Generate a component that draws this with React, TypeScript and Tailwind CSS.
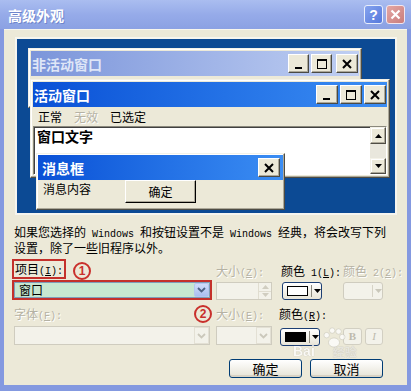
import React from 'react';

type Kind = 'min' | 'max' | 'close';

function Mono({ children }: { children: React.ReactNode }) {
  return <span className="font-['Liberation_Mono',monospace] text-[10px] leading-none">{children}</span>;
}

function Label({ text, pre = '', acc, disabled }: { text: string; pre?: string; acc: string; disabled?: boolean }) {
  return (
    <span className={disabled ? 'text-[#b5b2a4] [text-shadow:1px_1px_0_#fff]' : 'text-black'}>
      {text}
      <Mono>
        {pre}(<span className="underline">{acc}</span>):
      </Mono>
    </span>
  );
}

function Num({ n }: { n: string }) {
  return (
    <span className="w-[18px] h-[18px] rounded-full border-2 border-[#c9302c] text-[#c9302c] font-bold text-[12px] leading-none flex items-center justify-center font-['Liberation_Sans',sans-serif]">
      {n}
    </span>
  );
}

function TitleBtn({ kind, w = 'w-[21px]' }: { kind: Kind; w?: string }) {
  return (
    <div className={`${w} h-[19px] bg-[#ece9d8] border border-t-white border-l-white border-r-[#4a4a44] border-b-[#4a4a44] shadow-[inset_-1px_-1px_0_#aca899] flex items-center justify-center`}>
      <svg width="14" height="12" viewBox="0 0 14 12">
        {kind === 'min' && <rect x="3" y="9" width="7" height="2" fill="#000" />}
        {kind === 'max' && (
          <>
            <rect x="2.5" y="1.5" width="9" height="9" fill="none" stroke="#000" />
            <rect x="2" y="1" width="10" height="2" fill="#000" />
          </>
        )}
        {kind === 'close' && <path d="M3 2 L11 10 M11 2 L3 10" stroke="#000" strokeWidth="2" />}
      </svg>
    </div>
  );
}

function Chevron({ color }: { color: string }) {
  return (
    <svg width="9" height="6" viewBox="0 0 9 6">
      <path d="M1 1 L4.5 4.5 L8 1" fill="none" stroke={color} strokeWidth="1.8" />
    </svg>
  );
}

function Tri({ color = '#000', up }: { color?: string; up?: boolean }) {
  return (
    <svg width="7" height="4" viewBox="0 0 7 4">
      <path d={up ? 'M0 4 L3.5 0 L7 4 Z' : 'M0 0 L7 0 L3.5 4 Z'} fill={color} />
    </svg>
  );
}

function ColorBtn({ swatch, disabled }: { swatch?: string; disabled?: boolean }) {
  return (
    <div
      className={`w-[40px] h-[18px] rounded-[3px] border flex items-center pl-[4px] ${
        disabled ? 'border-[#cfccbf] bg-[#f3f2ea]' : 'border-[#1c3e73] bg-gradient-to-b from-white to-[#e8e5d8]'
      }`}
    >
      <div className="w-[22px] h-[10px] border border-black" style={swatch ? { background: swatch } : { borderColor: 'transparent' }} />
      <div className={`ml-[3px] h-[12px] border-l ${disabled ? 'border-[#d6d3c6]' : 'border-[#8c8a80]'}`} />
      <div className="ml-[2px]">
        <Tri color={disabled ? '#c9c7ba' : '#000'} />
      </div>
    </div>
  );
}

function XpButton({ label }: { label: string }) {
  return (
    <div className="w-[73px] h-[19px] rounded-[3px] border border-[#003c74] bg-gradient-to-b from-white to-[#e6e3d6] shadow-[inset_0_-2px_0_#d8d2c4] flex items-center justify-center text-[13px] leading-none">
      {label}
    </div>
  );
}

const frame =
  'bg-[#ece9d8] border border-t-[#f4f2e8] border-l-[#f4f2e8] border-r-[#4e4c44] border-b-[#4e4c44] shadow-[inset_-1px_-1px_0_#aca899,inset_1px_1px_0_#fff]';

export default function App() {
  return (
    <div className="w-[411px] h-[391px] bg-[#8499e0] flex flex-col font-['Noto_Sans_CJK_SC',sans-serif] text-[12px] text-black overflow-hidden relative">
      {/* title bar */}
      <div className="h-[29px] shrink-0 flex items-center justify-between pl-[8px] pr-[6px] bg-gradient-to-b from-[#aabdf0] via-[#96abe9] to-[#8ba1e3]">
        <span className="text-white text-[14px] font-bold leading-none [text-shadow:1px_1px_0_#6f86cc]">高级外观</span>
        <div className="flex gap-[3px]">
          <div className="w-[19px] h-[19px] rounded-[3px] border border-[#e8eefc] bg-gradient-to-br from-[#86a3ee] to-[#5678dc] flex items-center justify-center text-white font-bold text-[14px] leading-none font-['Liberation_Sans',sans-serif]">
            ?
          </div>
          <div className="w-[19px] h-[19px] rounded-[3px] border border-[#f2e6ee] bg-gradient-to-br from-[#e4a7a4] to-[#c97d7c] flex items-center justify-center">
            <svg width="11" height="11" viewBox="0 0 11 11">
              <path d="M1.5 1.5 L9.5 9.5 M9.5 1.5 L1.5 9.5" stroke="#fff" strokeWidth="2.2" />
            </svg>
          </div>
        </div>
      </div>

      {/* dialog body */}
      <div className="mx-[4px] h-[356px] shrink-0 bg-[#ece9d8] border-t border-[#f7f5ec] flex flex-col">
        {/* preview */}
        <div className="ml-[11px] mt-[7px] w-[382px] h-[178px] shrink-0 border-2 border-[#f6f5ef] bg-[#0c4a94] relative">
          {/* inactive window */}
          <div className={`absolute left-[11px] top-[9px] w-[334px] h-[60px] p-[2px] ${frame}`}>
            <div className="h-[25px] flex items-center justify-between pl-[1px] pr-[1px] bg-gradient-to-r from-[#7c95da] to-[#c0cff2]">
              <span className="text-[14px] font-bold text-[#dfe6f7] leading-none">非活动窗口</span>
              <div className="flex">
                <TitleBtn kind="min" />
                <div className="ml-[2px]">
                  <TitleBtn kind="max" />
                </div>
                <div className="ml-[4px]">
                  <TitleBtn kind="close" w="w-[22px]" />
                </div>
              </div>
            </div>
          </div>

          {/* active window */}
          <div className={`absolute left-[13px] top-[40px] w-[360px] h-[99px] p-[2px] flex flex-col ${frame}`}>
            <div className="h-[25px] shrink-0 flex items-center justify-between pl-[1px] pr-[1px] bg-gradient-to-r from-[#0a50d6] to-[#3b8df3]">
              <span className="text-[14px] font-bold text-white leading-none">活动窗口</span>
              <div className="flex gap-[2px]">
                <TitleBtn kind="min" w="w-[22px]" />
                <TitleBtn kind="max" w="w-[22px]" />
                <TitleBtn kind="close" w="w-[22px]" />
              </div>
            </div>
            <div className="h-[19px] shrink-0 flex items-center gap-[12px] pl-[5px] leading-none">
              <span>正常</span>
              <span className="text-[#b5b2a4] [text-shadow:1px_1px_0_#fff]">无效</span>
              <span>已选定</span>
            </div>
            <div className="flex-1 flex bg-white border border-t-[#8a887c] border-l-[#8a887c] border-r-white border-b-white shadow-[inset_1px_1px_0_#404040]">
              <div className="flex-1 pl-[3px] pt-[1px] text-[14px] font-bold leading-[16px]">窗口文字</div>
              <div className="w-[16px] flex flex-col bg-[#e9e7dd]">
                <div className={`h-[17px] flex items-center justify-center ${frame}`}>
                  <Tri up />
                </div>
                <div className="flex-1" />
                <div className={`h-[16px] flex items-center justify-center ${frame}`}>
                  <Tri />
                </div>
              </div>
            </div>
          </div>

          {/* message box */}
          <div className={`absolute left-[19px] top-[114px] w-[249px] h-[57px] p-[1px] flex flex-col ${frame}`}>
            <div className="h-[25px] shrink-0 flex items-center justify-between pl-[4px] pr-[3px] bg-gradient-to-r from-[#0a50d6] to-[#3b8df3]">
              <span className="text-[14px] font-bold text-white leading-none">消息框</span>
              <TitleBtn kind="close" w="w-[22px]" />
            </div>
            <div className="flex items-start">
              <span className="pl-[5px] pt-[2px] leading-[14px]">消息内容</span>
              <div className="ml-[34px] w-[71px] h-[23px] bg-[#ece9d8] border border-t-white border-l-white border-r-black border-b-black shadow-[inset_-1px_-1px_0_#aca899] flex items-center justify-center leading-none">
                确定
              </div>
            </div>
          </div>
        </div>

        {/* explanation */}
        <div className="ml-[10px] mt-[9px] h-[30px] shrink-0 leading-[15px] whitespace-nowrap">
          如果您选择的<Mono> Windows </Mono>和按钮设置不是<Mono> Windows </Mono>经典，将会改写下列
          <br />
          设置，除了一些旧程序以外。
        </div>

        {/* controls */}
        <div className="ml-[8px] mt-[5px] grid grid-cols-[204px_64px_63px_40px] grid-rows-[21px_20px_26px_20px] leading-[14px]">
          {/* row 1 labels */}
          <div className="flex items-start">
            <div className="h-[20px] border-2 border-[#c4302b] pl-[1px] pr-[1px] flex items-center">
              <Label text="项目" acc="I" />
            </div>
            <div className="ml-[7px] mt-[3px]">
              <Num n="1" />
            </div>
          </div>
          <div className="self-end pb-[1px]">
            <Label text="大小" acc="Z" disabled />
          </div>
          <div className="self-end pb-[1px] pl-[1px]">
            <Label text="颜色" pre=" 1" acc="L" />
          </div>
          <div className="self-end pb-[1px] whitespace-nowrap">
            <Label text="颜色" pre=" 2" acc="2" disabled />
          </div>

          {/* row 1 controls */}
          <div className="w-[200px] h-[20px] border-2 border-[#c4302b]">
            <div className="h-full border border-[#7f9db9] bg-[#c7e7d0] flex items-center">
              <span className="flex-1 pl-[4px] leading-none">窗口</span>
              <div className="w-[15px] h-full rounded-[2px] bg-gradient-to-b from-[#cfdcfa] to-[#aabff0] border border-[#b4c6ef] flex items-center justify-center">
                <Chevron color="#4d6185" />
              </div>
            </div>
          </div>
          <div className="mt-[2px] w-[56px] h-[18px] border border-[#cfccbf] bg-[#f3f2ea] flex justify-end">
            <div className="w-[13px] h-full flex flex-col border-l border-[#e0ddd0]">
              <div className="flex-1 flex items-center justify-center border-b border-[#e0ddd0]">
                <Tri up color="#d0cdc0" />
              </div>
              <div className="flex-1 flex items-center justify-center">
                <Tri color="#d0cdc0" />
              </div>
            </div>
          </div>
          <div className="mt-[2px] ml-[2px]">
            <ColorBtn swatch="#ffffff" />
          </div>
          <div className="mt-[2px]">
            <ColorBtn disabled />
          </div>

          {/* row 2 labels */}
          <div className="w-[200px] flex items-end justify-between pb-[3px]">
            <span className="ml-[2px] mb-[1px]">
              <Label text="字体" acc="F" disabled />
            </span>
            <Num n="2" />
          </div>
          <div className="self-end pb-[4px]">
            <Label text="大小" acc="E" disabled />
          </div>
          <div className="self-end pb-[4px] -ml-[1px]">
            <Label text="颜色" acc="R" />
          </div>
          <div />

          {/* row 2 controls */}
          <div className="ml-[2px] w-[196px] h-[19px] border border-[#cfccbf] bg-[#f3f2ea] flex justify-end">
            <div className="w-[15px] h-full border border-[#e3e0d4] flex items-center justify-center">
              <Chevron color="#cbc8bb" />
            </div>
          </div>
          <div className="w-[56px] h-[19px] border border-[#cfccbf] bg-[#f3f2ea] flex justify-end">
            <div className="w-[15px] h-full border border-[#e3e0d4] flex items-center justify-center">
              <Chevron color="#cbc8bb" />
            </div>
          </div>
          <div className="mt-[2px]">
            <ColorBtn swatch="#000000" />
          </div>
          <div className="mt-[2px] flex gap-[3px]">
            <div className="w-[19px] h-[17px] rounded-[3px] border border-[#d2cfc2] bg-[#f3f2ea] flex items-center justify-center font-['Liberation_Serif',serif] font-bold text-[11px] text-[#bdbaad] leading-none">
              B
            </div>
            <div className="w-[18px] h-[17px] rounded-[3px] border border-[#d2cfc2] bg-[#f3f2ea] flex items-center justify-center font-['Liberation_Serif',serif] italic text-[11px] text-[#bdbaad] leading-none">
              I
            </div>
          </div>
        </div>

        {/* buttons */}
        <div className="mt-[13px] flex justify-end gap-[8px] pr-[24px]">
          <XpButton label="确定" />
          <XpButton label="取消" />
        </div>
      </div>

      {/* watermark */}
      <div className="absolute left-[293px] top-[344px] flex items-end pointer-events-none opacity-75">
        <span className="font-['Liberation_Sans',sans-serif] font-bold text-[14px] leading-none text-white [text-shadow:0_0_1px_#9a978c]">Bai</span>
        <span className="ml-[18px] font-bold text-[12px] leading-none text-white/70 [text-shadow:0_0_1px_#9a978c]">经验</span>
      </div>
      <svg className="absolute left-[322px] top-[326px] pointer-events-none opacity-75" width="24" height="22" viewBox="0 0 26 24">
        <circle cx="5" cy="10" r="3" fill="#fff" stroke="#b8b5a8" strokeWidth="0.6" />
        <circle cx="11" cy="5" r="3" fill="#fff" stroke="#b8b5a8" strokeWidth="0.6" />
        <circle cx="18" cy="6" r="3" fill="#fff" stroke="#b8b5a8" strokeWidth="0.6" />
        <circle cx="22" cy="12" r="3" fill="#fff" stroke="#b8b5a8" strokeWidth="0.6" />
        <ellipse cx="13" cy="18" rx="6" ry="5" fill="#fff" stroke="#b8b5a8" strokeWidth="0.6" />
      </svg>
    </div>
  );
}
